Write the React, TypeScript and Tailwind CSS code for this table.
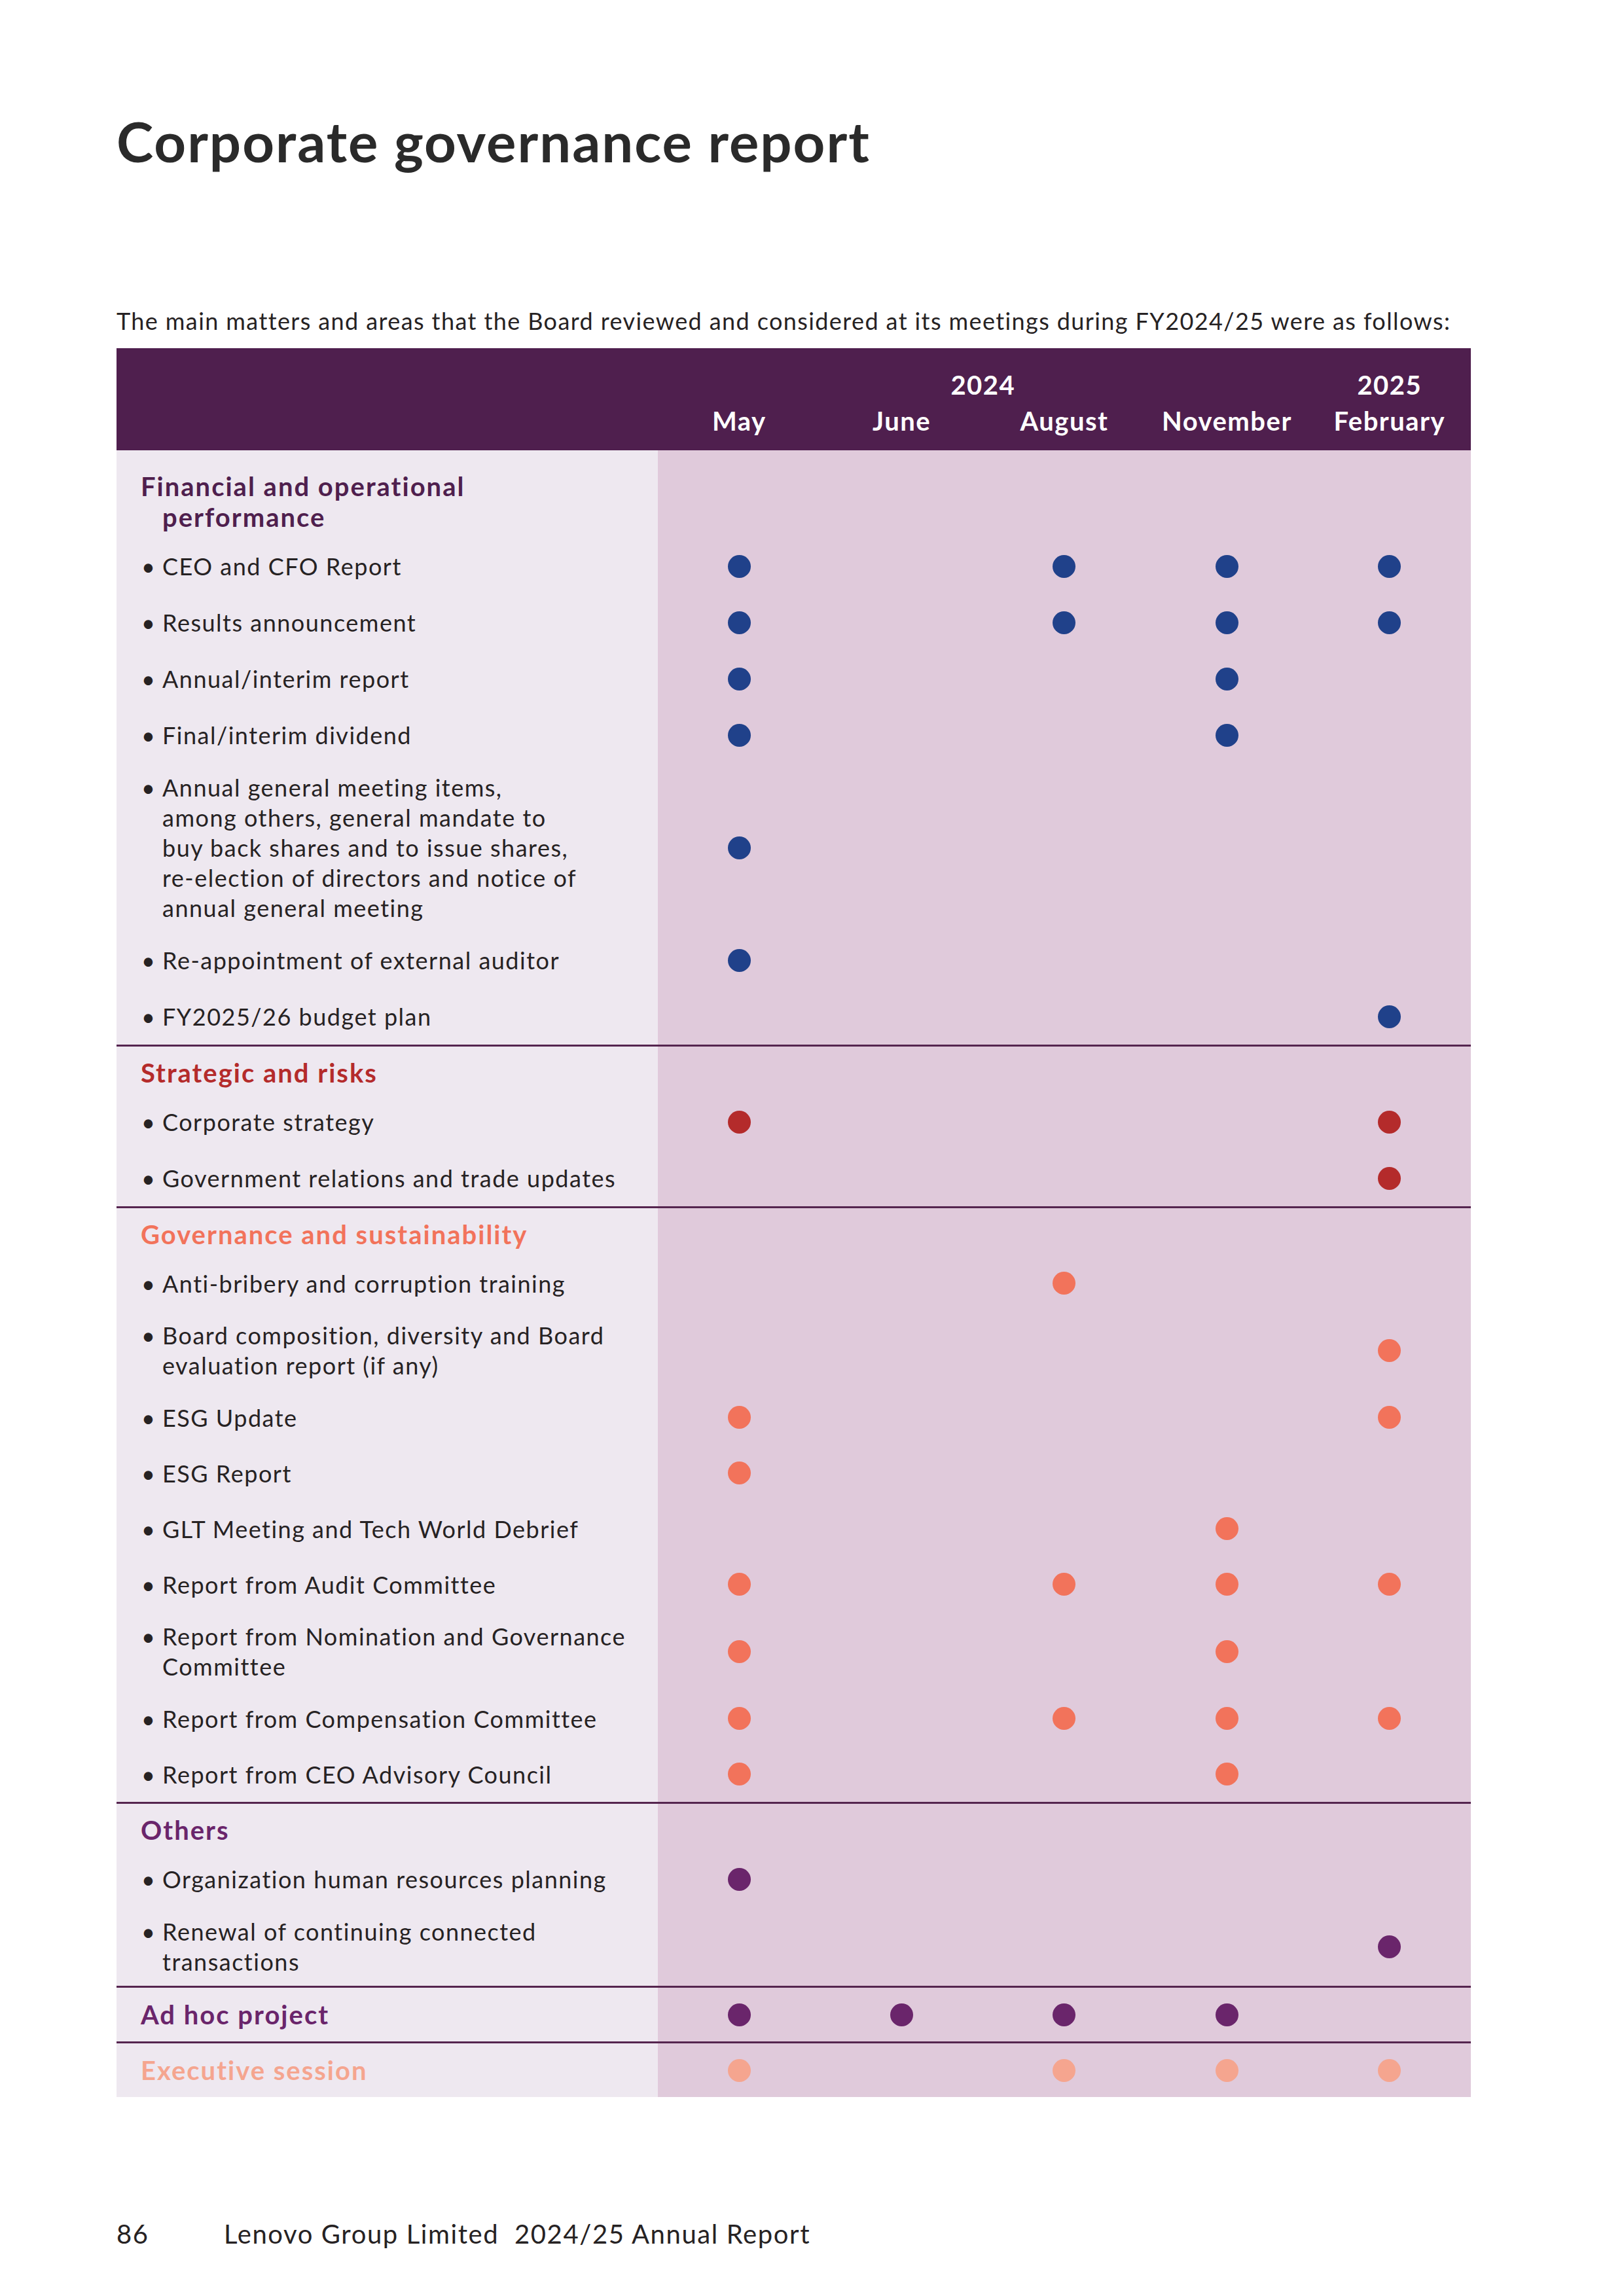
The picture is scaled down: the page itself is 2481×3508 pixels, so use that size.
import React from 'react';

type Item = { lines: string[]; dots: number[] };
type Section = {
  title: string[];
  color: string;
  dot: string;
  items: Item[];
  first?: boolean;
  tight?: boolean;
};

const months = ['May', 'June', 'August', 'November', 'February'];

const sections: Section[] = [
  {
    title: ['Financial and operational', 'performance'],
    color: '#4F1F4E',
    dot: '#20418A',
    first: true,
    items: [
      { lines: ['CEO and CFO Report'], dots: [0, 2, 3, 4] },
      { lines: ['Results announcement'], dots: [0, 2, 3, 4] },
      { lines: ['Annual/interim report'], dots: [0, 3] },
      { lines: ['Final/interim dividend'], dots: [0, 3] },
      {
        lines: [
          'Annual general meeting items,',
          'among others, general mandate to',
          'buy back shares and to issue shares,',
          're-election of directors and notice of',
          'annual general meeting',
        ],
        dots: [0],
      },
      { lines: ['Re-appointment of external auditor'], dots: [0] },
      { lines: ['FY2025/26 budget plan'], dots: [4] },
    ],
  },
  {
    title: ['Strategic and risks'],
    color: '#B42B2B',
    dot: '#B42B2B',
    items: [
      { lines: ['Corporate strategy'], dots: [0, 4] },
      { lines: ['Government relations and trade updates'], dots: [4] },
    ],
  },
  {
    title: ['Governance and sustainability'],
    color: '#F2735B',
    dot: '#F2735B',
    tight: true,
    items: [
      { lines: ['Anti-bribery and corruption training'], dots: [2] },
      { lines: ['Board composition, diversity and Board', 'evaluation report (if any)'], dots: [4] },
      { lines: ['ESG Update'], dots: [0, 4] },
      { lines: ['ESG Report'], dots: [0] },
      { lines: ['GLT Meeting and Tech World Debrief'], dots: [3] },
      { lines: ['Report from Audit Committee'], dots: [0, 2, 3, 4] },
      { lines: ['Report from Nomination and Governance', 'Committee'], dots: [0, 3] },
      { lines: ['Report from Compensation Committee'], dots: [0, 2, 3, 4] },
      { lines: ['Report from CEO Advisory Council'], dots: [0, 3] },
    ],
  },
  {
    title: ['Others'],
    color: '#6A256B',
    dot: '#6A256B',
    items: [
      { lines: ['Organization human resources planning'], dots: [0] },
      { lines: ['Renewal of continuing connected', 'transactions'], dots: [4] },
    ],
  },
];

const Dots = ({ dots, color }: { dots: number[]; color: string }) => (
  <div className="flex-1 grid grid-cols-5 items-center bg-[#E0CADB]">
    {[0, 1, 2, 3, 4].map((i) => (
      <div key={i} className="flex justify-center">
        {dots.includes(i) && (
          <span className="block w-[35px] h-[35px] rounded-full" style={{ backgroundColor: color }} />
        )}
      </div>
    ))}
  </div>
);

const ItemRow = ({ item, dot, tight }: { item: Item; dot: string; tight?: boolean }) => (
  <div className={`flex ${tight ? 'min-h-[85px]' : 'min-h-[86px]'}`}>
    <div className="w-[827px] bg-[#EEE8F0] pl-[37px] py-[14px] flex items-center">
      <div className="flex text-[36px] leading-[46px] tracking-[1.5px] text-[#262223]">
        <span className="w-[33px] shrink-0 pl-[1px]">•</span>
        <div>
          {item.lines.map((l, i) => (
            <div key={i} className="whitespace-nowrap">{l}</div>
          ))}
        </div>
      </div>
    </div>
    <Dots dots={item.dots} color={dot} />
  </div>
);

const SectionBlock = ({ s }: { s: Section }) => (
  <div className={s.first ? '' : 'border-t-[3px] border-[#55254f]'}>
    <div className="flex">
      <div
        className={`w-[827px] bg-[#EEE8F0] pl-[37px] pb-[8px] ${s.first ? 'pt-[32px]' : 'pt-[17px]'}`}
      >
        {s.title.map((t, i) => (
          <div
            key={i}
            className={`text-[40px] leading-[47px] font-bold tracking-[2px] whitespace-nowrap ${i > 0 ? 'pl-[33px]' : ''}`}
            style={{ color: s.color }}
          >
            {t}
          </div>
        ))}
      </div>
      <div className="flex-1 bg-[#E0CADB]" />
    </div>
    {s.items.map((it, i) => (
      <ItemRow key={i} item={it} dot={s.dot} tight={s.tight} />
    ))}
  </div>
);

const SingleRow = ({ title, color, dot, dots }: { title: string; color: string; dot: string; dots: number[] }) => (
  <div className="flex h-[85px] border-t-[3px] border-[#55254f]">
    <div className="w-[827px] bg-[#EEE8F0] pl-[37px] flex items-center">
      <span className="text-[40px] leading-[47px] font-bold tracking-[2px]" style={{ color }}>
        {title}
      </span>
    </div>
    <Dots dots={dots} color={dot} />
  </div>
);

export default function App() {
  return (
    <div
      className="w-[2481px] min-h-[3508px] bg-white pl-[178px] pr-[234px] pt-[173px]"
      style={{ fontFamily: 'Lato, "Liberation Sans", sans-serif' }}
    >
      <h1 className="text-[85px] leading-[85px] font-bold text-[#2a2a2a] tracking-[2px]">
        Corporate governance report
      </h1>

      <p className="mt-[209px] text-[36px] leading-[46px] tracking-[1.4px] text-[#262223] whitespace-nowrap">
        The main matters and areas that the Board reviewed and considered at its meetings during FY2024/25 were as follows:
      </p>

      <div className="mt-[19px] w-[2069px]">
        {/* Header */}
        <div className="flex bg-[#4F1F4E] text-white font-bold text-[40px] leading-[55px] tracking-[1.5px] pt-[29px] pb-[17px]">
          <div className="w-[827px]" />
          <div className="flex-1 grid grid-cols-5">
            <div className="col-span-4 text-center">2024</div>
            <div className="text-center">2025</div>
            {months.map((m) => (
              <div key={m} className="text-center">
                {m}
              </div>
            ))}
          </div>
        </div>

        {sections.map((s, i) => (
          <SectionBlock key={i} s={s} />
        ))}

        <SingleRow title="Ad hoc project" color="#6A256B" dot="#6A256B" dots={[0, 1, 2, 3]} />
        <SingleRow title="Executive session" color="#F5A58F" dot="#F5A58F" dots={[0, 2, 3, 4]} />
      </div>

      {/* Footer */}
      <div className="mt-[186px] flex text-[40px] leading-[46px] tracking-[1.6px] text-[#262223]">
        <span className="w-[164px]">86</span>
        <span className="whitespace-pre">Lenovo Group Limited  2024/25 Annual Report</span>
      </div>
    </div>
  );
}
